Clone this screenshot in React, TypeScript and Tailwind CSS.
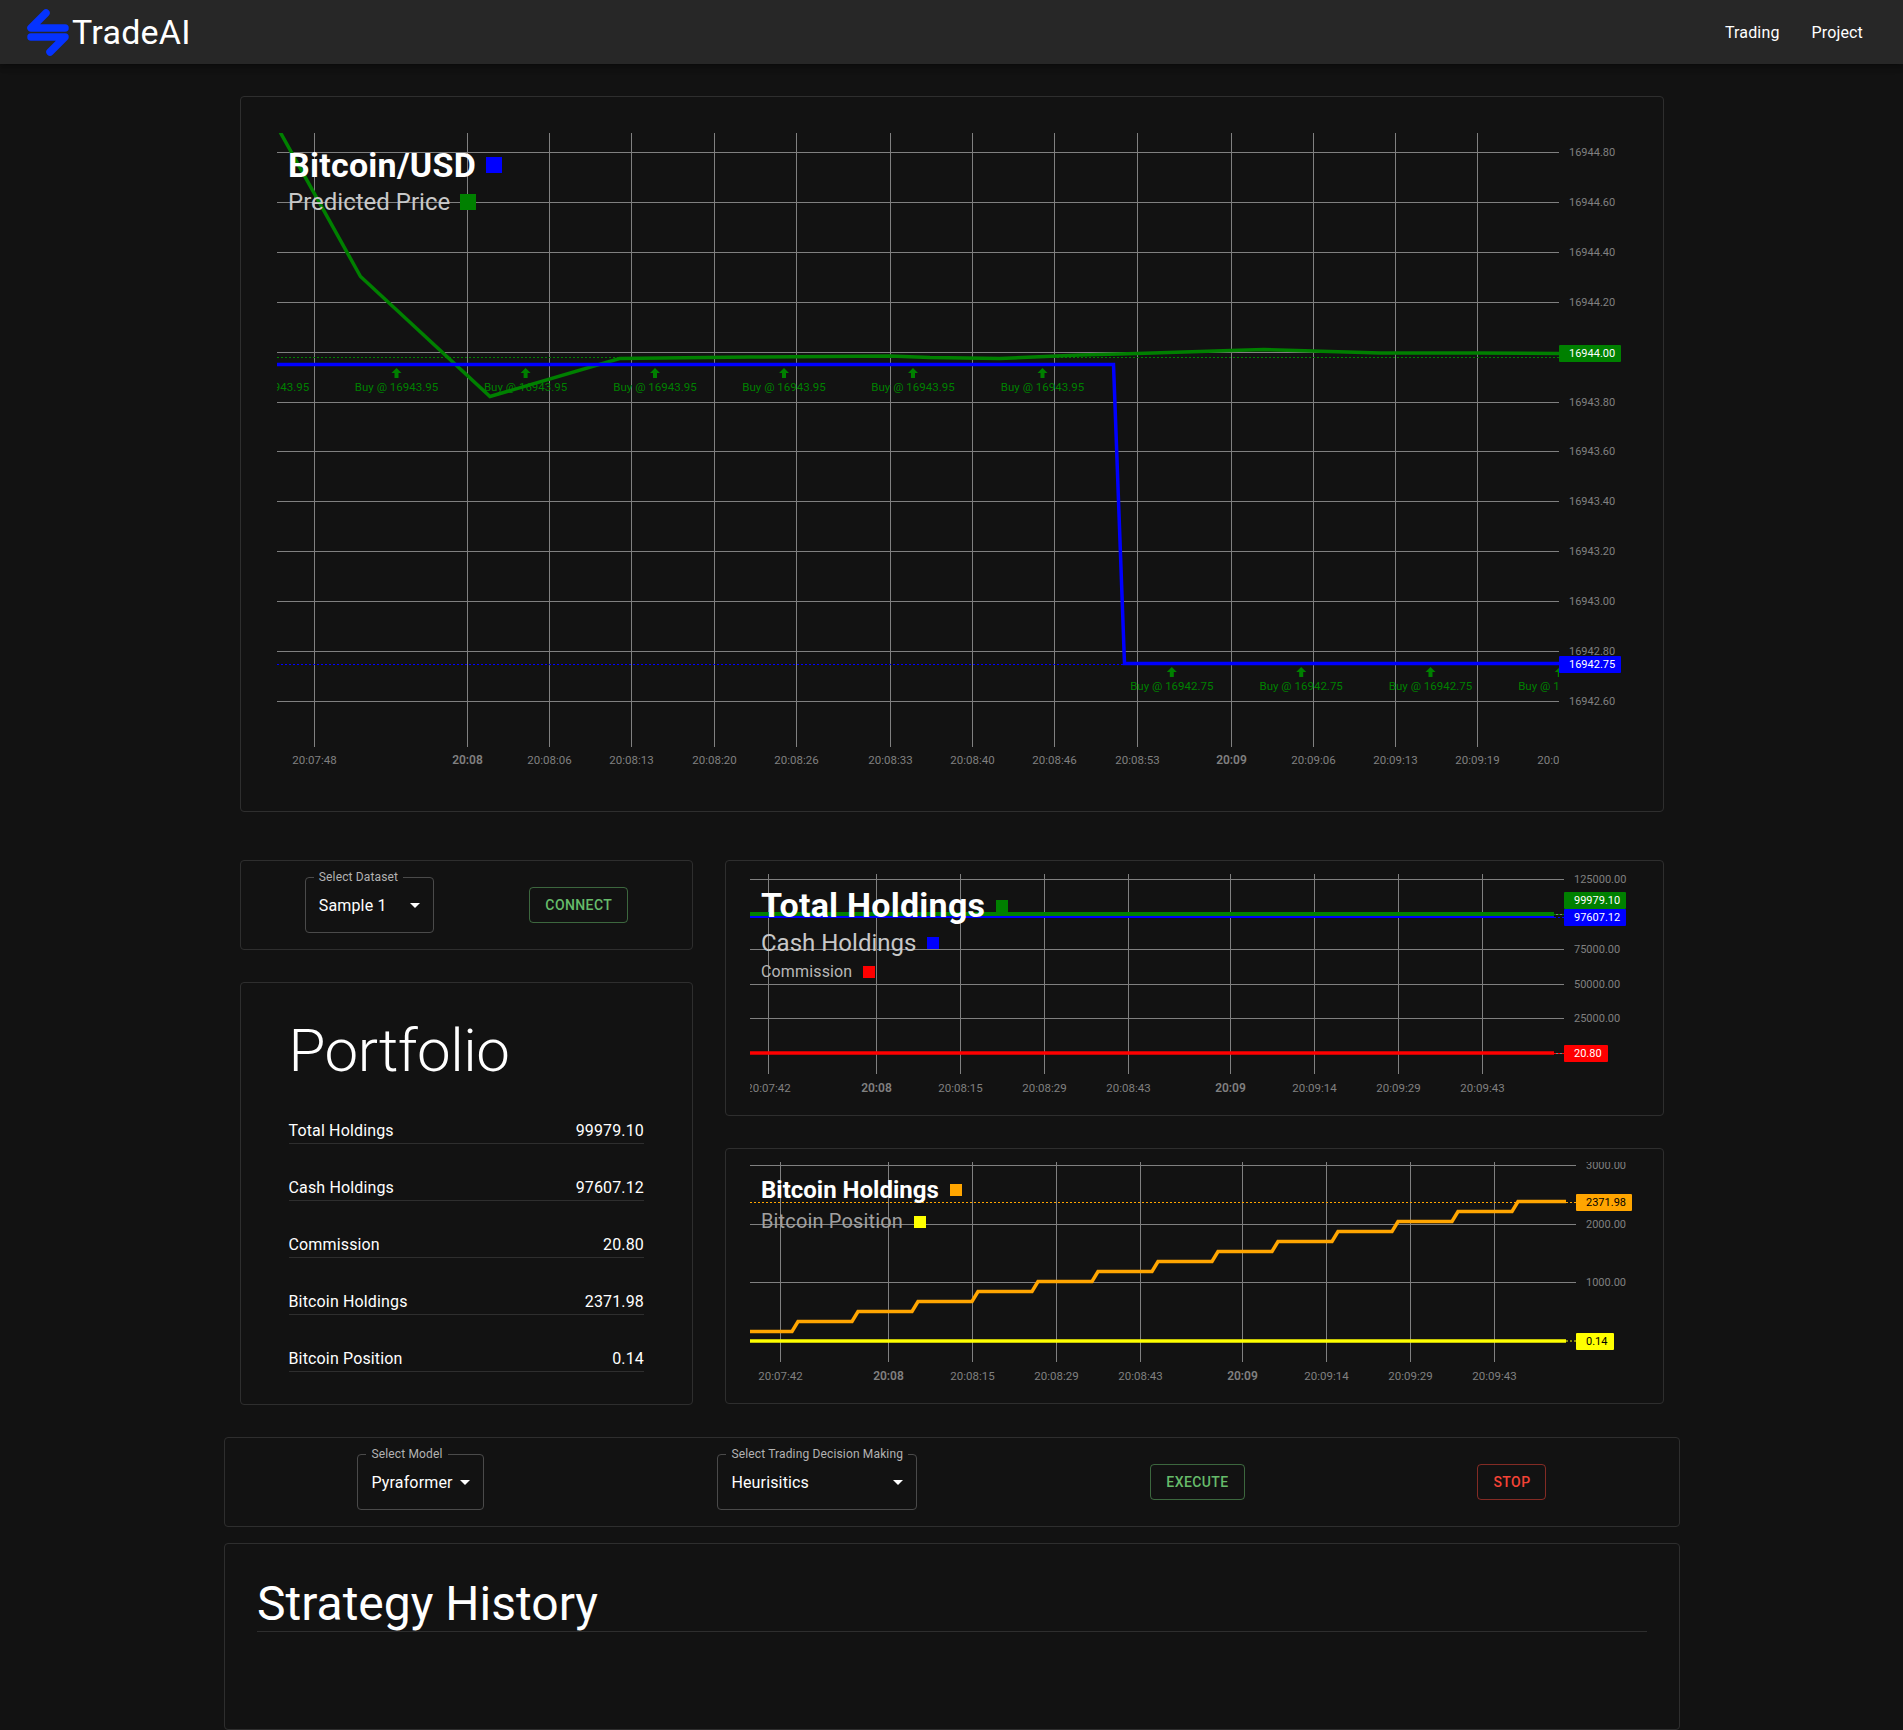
import React from 'react';

type Tag = { y: number; top: number; bottom: number; right: number; fill: string; text: string; dark?: boolean };
type Tick = { x: number; label: string; major?: boolean };
type Level = { y: number; label?: string };

// chart coordinates are page pixels, the viewBox handles the offset
function ChartFrame({
  left, top, width, height, paneRight, paneBottom, levels, ticks, tags, labelY, children,
}: {
  left: number; top: number; width: number; height: number;
  paneRight: number; paneBottom: number;
  levels: Level[]; ticks: Tick[]; tags: Tag[]; labelY: number;
  children: React.ReactNode;
}) {
  const paneWidth = paneRight - left;
  return (
    <svg width={width} height={height} viewBox={`${left} ${top} ${width} ${height}`} className="block">
      {levels.map((l) => (
        <line key={l.y} x1={left} x2={paneRight} y1={l.y} y2={l.y} stroke="#808080" strokeWidth="1" />
      ))}
      {ticks.filter((t) => t.x < paneRight).map((t) => (
        <line key={t.x} x1={t.x} x2={t.x} y1={top} y2={paneBottom} stroke="#808080" strokeWidth="1" />
      ))}
      <svg x={left} y={top} width={paneWidth} height={paneBottom - top} viewBox={`${left} ${top} ${paneWidth} ${paneBottom - top}`}>
        {children}
      </svg>
      <svg x={left} y={paneBottom} width={paneWidth} height={height} viewBox={`${left} ${paneBottom} ${paneWidth} ${height}`}>
        {ticks.map((t) => (
          <text
            key={t.x}
            x={t.x}
            y={labelY}
            textAnchor="middle"
            dominantBaseline="central"
            className={t.major ? 'fill-[#808080] text-[12px] font-semibold' : 'fill-[#808080] text-[11.5px]'}
          >
            {t.label}
          </text>
        ))}
      </svg>
      {levels.filter((l) => l.label).map((l) => (
        <text key={l.y} x={paneRight + 10} y={l.y} dominantBaseline="central" className="fill-[#808080] text-[11px]">
          {l.label}
        </text>
      ))}
      {tags.map((t) => (
        <g key={t.text}>
          <rect x={paneRight} y={t.top} width={t.right - paneRight} height={t.bottom - t.top} rx="1" fill={t.fill} />
          <text
            x={paneRight + 10}
            y={t.y}
            dominantBaseline="central"
            className={t.dark ? 'fill-black text-[11px]' : 'fill-white text-[11px]'}
          >
            {t.text}
          </text>
        </g>
      ))}
    </svg>
  );
}

function BuyMarker({ x, top, price }: { x: number; top: number; price: string }) {
  return (
    <g>
      <path
        d={`M${x} ${top}L${x + 5} ${top + 5}H${x + 2}V${top + 10}H${x - 2}V${top + 5}H${x - 5}Z`}
        fill="#008000"
      />
      <text x={x} y={top + 19} textAnchor="middle" dominantBaseline="central" className="fill-[#008000] text-[11.5px]">
        Buy @ {price}
      </text>
    </g>
  );
}

function PriceChart() {
  const levels: Level[] = [
    '16944.80', '16944.60', '16944.40', '16944.20', '', '16943.80',
    '16943.60', '16943.40', '16943.20', '16943.00', '16942.80', '16942.60',
  ].map((label, i) => ({ y: Math.round(152 + 49.9 * i) + 0.5, label }));
  const ticks: Tick[] = [
    { x: 314.5, label: '20:07:48' },
    { x: 467.5, label: '20:08', major: true },
    { x: 549.5, label: '20:08:06' },
    { x: 631.5, label: '20:08:13' },
    { x: 714.5, label: '20:08:20' },
    { x: 796.5, label: '20:08:26' },
    { x: 890.5, label: '20:08:33' },
    { x: 972.5, label: '20:08:40' },
    { x: 1054.5, label: '20:08:46' },
    { x: 1137.5, label: '20:08:53' },
    { x: 1231.5, label: '20:09', major: true },
    { x: 1313.5, label: '20:09:06' },
    { x: 1395.5, label: '20:09:13' },
    { x: 1477.5, label: '20:09:19' },
    { x: 1559.5, label: '20:09:26' },
  ];
  const tags: Tag[] = [
    { y: 353.5, top: 345, bottom: 362, right: 1621, fill: '#008000', text: '16944.00' },
    { y: 664.5, top: 656, bottom: 673, right: 1621, fill: '#0000ff', text: '16942.75' },
  ];
  return (
    <ChartFrame left={277} top={133} width={1350} height={642} paneRight={1559} paneBottom={747} levels={levels} ticks={ticks} tags={tags} labelY={760}>
      <line x1={277} x2={1559} y1={357.5} y2={357.5} stroke="#008000" strokeDasharray="2 2" />
      <line x1={277} x2={1124} y1={664.5} y2={664.5} stroke="#0000ff" strokeDasharray="2 2" />
      <polyline
        fill="none"
        stroke="#008000"
        strokeWidth="3.5"
        points="279,130 360.5,276.5 490,396.5 619.5,358.5 750,357 890,356 930,357.5 1000,358.5 1080,355 1137,353.5 1231,350.5 1264,349.5 1313,351 1380,353 1477,353 1559,353.5"
      />
      <polyline fill="none" stroke="#0000ff" strokeWidth="3.5" points="277,364.5 1113.5,364.5 1124.5,663.5 1559,663.5" />
      {[267.6, 396.5, 525.6, 655, 784, 913, 1042.5].map((x) => (
        <BuyMarker key={x} x={x} top={368} price="16943.95" />
      ))}
      {[1171.8, 1301.2, 1430.5, 1559.8].map((x) => (
        <BuyMarker key={x} x={x} top={667} price="16942.75" />
      ))}
    </ChartFrame>
  );
}

function HoldingsChart() {
  const levels: Level[] = [
    { y: 879.5, label: '125000.00' },
    { y: 914.5 },
    { y: 949.5, label: '75000.00' },
    { y: 984.5, label: '50000.00' },
    { y: 1018.5, label: '25000.00' },
    { y: 1053.5 },
  ];
  const ticks: Tick[] = [
    { x: 768.5, label: '20:07:42' },
    { x: 876.5, label: '20:08', major: true },
    { x: 960.5, label: '20:08:15' },
    { x: 1044.5, label: '20:08:29' },
    { x: 1128.5, label: '20:08:43' },
    { x: 1230.5, label: '20:09', major: true },
    { x: 1314.5, label: '20:09:14' },
    { x: 1398.5, label: '20:09:29' },
    { x: 1482.5, label: '20:09:43' },
  ];
  const tags: Tag[] = [
    { y: 900.5, top: 892, bottom: 909, right: 1626, fill: '#008000', text: '99979.10' },
    { y: 917.5, top: 909, bottom: 926, right: 1626, fill: '#0000ff', text: '97607.12' },
    { y: 1053.5, top: 1045, bottom: 1062, right: 1608, fill: '#ff0000', text: '20.80' },
  ];
  return (
    <ChartFrame left={750} top={874} width={889} height={228} paneRight={1564} paneBottom={1074} levels={levels} ticks={ticks} tags={tags} labelY={1087.5}>
      <line x1={750} x2={1564} y1={914.5} y2={914.5} stroke="#008000" strokeDasharray="2 2" />
      <line x1={750} x2={1564} y1={917.5} y2={917.5} stroke="#0000ff" strokeDasharray="2 2" />
      <line x1={750} x2={1564} y1={1053.5} y2={1053.5} stroke="#ff0000" strokeDasharray="2 2" />
      <line x1={750} x2={1554} y1={914} y2={914} stroke="#008000" strokeWidth="4" />
      <line x1={750} x2={1554} y1={917} y2={917} stroke="#0000ff" strokeWidth="2" />
      <line x1={750} x2={1554} y1={1053} y2={1053} stroke="#ff0000" strokeWidth="3.5" />
    </ChartFrame>
  );
}

function BitcoinChart() {
  const levels: Level[] = [
    { y: 1166.5, label: '3000.00' },
    { y: 1225.5, label: '2000.00' },
    { y: 1283.5, label: '1000.00' },
  ];
  const ticks: Tick[] = [
    { x: 780.5, label: '20:07:42' },
    { x: 888.5, label: '20:08', major: true },
    { x: 972.5, label: '20:08:15' },
    { x: 1056.5, label: '20:08:29' },
    { x: 1140.5, label: '20:08:43' },
    { x: 1242.5, label: '20:09', major: true },
    { x: 1326.5, label: '20:09:14' },
    { x: 1410.5, label: '20:09:29' },
    { x: 1494.5, label: '20:09:43' },
  ];
  const tags: Tag[] = [
    { y: 1203.5, top: 1195, bottom: 1212, right: 1632, fill: '#ffa500', text: '2371.98', dark: true },
    { y: 1342, top: 1334, bottom: 1351, right: 1614, fill: '#ffff00', text: '0.14', dark: true },
  ];
  // one step every 60px, each 10px up
  const stairs: string[] = ['750,1332.5'];
  for (let i = 0; i < 13; i++) {
    const x = 792 + i * 60;
    const y = 1332.5 - i * 10;
    stairs.push(`${x},${y}`, `${x + 6},${y - 10}`);
  }
  stairs.push('1566,1202.5');
  return (
    <ChartFrame left={750} top={1163} width={889} height={228} paneRight={1576} paneBottom={1363} levels={levels} ticks={ticks} tags={tags} labelY={1376.5}>
      <line x1={750} x2={1576} y1={1203.5} y2={1203.5} stroke="#ffa500" strokeDasharray="2 2" />
      <line x1={750} x2={1576} y1={1342} y2={1342} stroke="#ffff00" strokeDasharray="2 2" />
      <polyline fill="none" stroke="#ffa500" strokeWidth="3.5" points={stairs.join(' ')} />
      <line x1={750} x2={1566} y1={1342} y2={1342} stroke="#ffff00" strokeWidth="3.5" />
    </ChartFrame>
  );
}

function SelectBox({ label, value, width }: { label: string; value: string; width: string }) {
  return (
    <div className={`relative h-[56px] rounded border border-[#4a4a4a] ${width}`}>
      <span className="absolute -top-[9px] left-[8px] bg-[#121212] px-[5px] text-xs leading-[16px] tracking-[0.15px] text-[#b3b3b3]">{label}</span>
      <span className="absolute left-[13px] top-0 text-base leading-[55px] tracking-[0.15px] text-white">{value}</span>
      <svg className="absolute right-[6px] top-[15px] h-6 w-6 fill-white" viewBox="0 0 24 24">
        <path d="M7 10l5 5 5-5z" />
      </svg>
    </div>
  );
}

function Panel({ className, children }: { className?: string; children: React.ReactNode }) {
  return <div className={`rounded border border-[#2e2e2e] ${className ?? ''}`}>{children}</div>;
}

function LegendItem({ text, color, className }: { text: string; color: string; className: string }) {
  return (
    <div className="flex items-center gap-[11px]">
      <span className={className}>{text}</span>
      <span className={`h-3 w-3 ${color}`} />
    </div>
  );
}

const portfolio = [
  ['Total Holdings', '99979.10'],
  ['Cash Holdings', '97607.12'],
  ['Commission', '20.80'],
  ['Bitcoin Holdings', '2371.98'],
  ['Bitcoin Position', '0.14'],
];

export default function App() {
  return (
    <div className="h-[1730px] overflow-hidden bg-[#121212] font-[Roboto,sans-serif] text-white">
      <header className="flex h-16 items-center justify-between bg-[#272727] pl-6 pr-[40px] shadow-[0_2px_4px_-1px_rgba(0,0,0,0.2),0_4px_5px_0_rgba(0,0,0,0.14),0_1px_10px_0_rgba(0,0,0,0.12)]">
        <div className="flex items-center">
          <svg width="48" height="64" viewBox="24 0 48 64">
            <g fill="none" stroke="#0533ff" strokeWidth="7.5" strokeLinecap="round" strokeLinejoin="round">
              <path d="M46 13L31 28H65" />
              <path d="M31 37H65L50 52" />
            </g>
          </svg>
          <span className="text-[34px] leading-10 tracking-[0.25px]">TradeAI</span>
        </div>
        <nav className="flex gap-[32px] pt-[2px] text-base tracking-[0.15px]">
          <a>Trading</a>
          <a>Project</a>
        </nav>
      </header>

      <main className="ml-[224px] w-[1456px] pt-8">
        <div className="px-4">
          <Panel>
            <div className="relative p-9">
              <div className="absolute left-[47px] top-[49px]">
                <div className="flex items-center gap-[10px]">
                  <span className="text-[34px] font-bold leading-[38px] tracking-[0.25px]">Bitcoin/USD</span>
                  <span className="h-4 w-4 bg-[#0000ff]" />
                </div>
                <div className="flex items-center gap-[10px]">
                  <span className="text-2xl leading-[36px] text-[#c8c8c8]">Predicted Price</span>
                  <span className="h-4 w-4 bg-[#008000]" />
                </div>
              </div>
              <PriceChart />
            </div>
          </Panel>

          <div className="mt-12 flex gap-8">
            <div className="flex w-[453px] flex-col gap-8">
              <Panel className="flex items-center justify-around px-4 py-4">
                <SelectBox label="Select Dataset" value="Sample 1" width="w-[129px]" />
                <button className="rounded border border-[#66bb6a80] px-[15px] py-[5px] text-sm font-medium leading-[24.5px] tracking-[0.4px] text-[#66bb6a]">
                  CONNECT
                </button>
              </Panel>
              <Panel className="py-8 pl-[47.5px] pr-12">
                <h2 className="text-[60px] font-light leading-[72px] tracking-[-0.5px]">Portfolio</h2>
                {portfolio.map(([name, value]) => (
                  <div key={name} className="mt-8 flex justify-between border-b border-[#2e2e2e] text-base leading-6 tracking-[0.15px]">
                    <span>{name}</span>
                    <span>{value}</span>
                  </div>
                ))}
              </Panel>
            </div>

            <div className="flex w-[939px] flex-col gap-8">
              <Panel className="relative px-6 py-[13px]">
                <div className="absolute left-[35px] top-[25px]">
                  <LegendItem text="Total Holdings" color="bg-[#008000]" className="text-[34px] font-bold leading-[39px] tracking-[0.25px]" />
                  <LegendItem text="Cash Holdings" color="bg-[#0000ff]" className="text-2xl leading-[36px] text-[#c8c8c8]" />
                  <LegendItem text="Commission" color="bg-[#ff0000]" className="text-base leading-[22px] tracking-[0.15px] text-[#b8b8b8]" />
                </div>
                <HoldingsChart />
              </Panel>
              <Panel className="relative px-6 py-[13px]">
                <div className="absolute left-[35px] top-[26px]">
                  <LegendItem text="Bitcoin Holdings" color="bg-[#ffa500]" className="text-2xl font-bold leading-[30px]" />
                  <LegendItem text="Bitcoin Position" color="bg-[#ffff00]" className="text-xl leading-[33px] tracking-[0.15px] text-[#a0a0a0]" />
                </div>
                <BitcoinChart />
              </Panel>
            </div>
          </div>
        </div>

        <Panel className="mt-8 flex items-center justify-around px-4 py-4">
          <SelectBox label="Select Model" value="Pyraformer" width="w-[127px]" />
          <SelectBox label="Select Trading Decision Making" value="Heurisitics" width="w-[200px]" />
          <button className="rounded border border-[#66bb6a80] px-[15px] py-[5px] text-sm font-medium leading-[24.5px] tracking-[0.4px] text-[#66bb6a]">
            EXECUTE
          </button>
          <button className="rounded border border-[#f4433680] px-[15px] py-[5px] text-sm font-medium leading-[24.5px] tracking-[0.4px] text-[#f44336]">
            STOP
          </button>
        </Panel>

        <Panel className="mt-4 h-[187px] p-8">
          <h3 className="border-b border-[#2e2e2e] text-5xl leading-[55px]">Strategy History</h3>
        </Panel>
      </main>
    </div>
  );
}
